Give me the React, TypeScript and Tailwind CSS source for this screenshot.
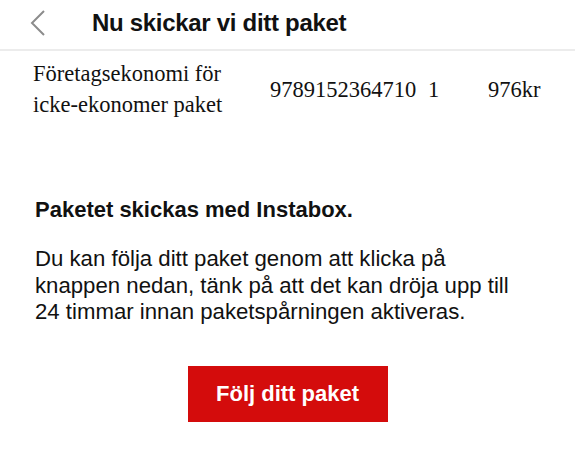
export default function App() {
  return (
    <div className="w-[575px] h-[454px] bg-white overflow-hidden font-['Liberation_Sans',Arial,sans-serif] text-[#111]">
      <header className="h-[51px] flex items-center border-b-2 border-[#ececec]">
        <div className="w-[92px] flex pl-[29px]">
          <svg width="18" height="28" viewBox="0 0 18 28" className="mt-[-4px]">
            <polyline points="15,2 3,14 15,26" fill="none" stroke="#8c8c8c" strokeWidth="2" />
          </svg>
        </div>
        <h1 className="text-[24px] font-bold tracking-[-0.3px] mt-[-4px]">Nu skickar vi ditt paket</h1>
      </header>

      <div className="flex items-center pt-[7px] font-['Liberation_Serif','Times_New_Roman',serif] text-[22.5px] leading-[31px]">
        <div className="w-[270px] pl-[33px] pr-[30px]">Företagsekonomi för icke-ekonomer paket</div>
        <div className="w-[158px]">9789152364710</div>
        <div className="w-[60px]">1</div>
        <div>976kr</div>
      </div>

      <div className="px-[35px] pt-[77px]">
        <h2 className="text-[22px] font-bold leading-[26px]">Paketet skickas med Instabox.</h2>
        <p className="mt-[23px] w-[495px] text-[22.2px] leading-[26.5px]">
          Du kan följa ditt paket genom att klicka på knappen nedan, tänk på att det kan dröja upp till 24 timmar innan paketspårningen aktiveras.
        </p>
      </div>

      <div className="flex justify-center pt-[40px]">
        <button className="w-[200px] h-[56px] bg-[#d40c0c] text-white text-[22px] font-bold">Följ ditt paket</button>
      </div>
    </div>
  )
}
